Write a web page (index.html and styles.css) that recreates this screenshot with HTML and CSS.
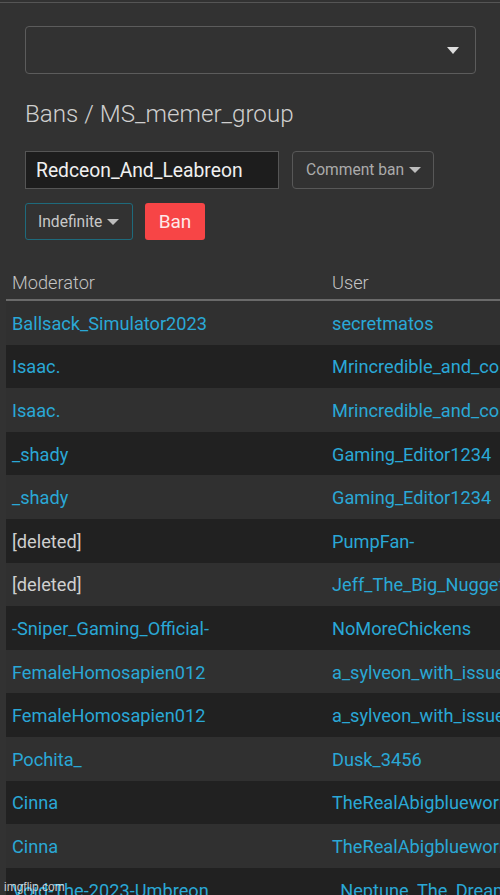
FILE: index.html
```html
<!DOCTYPE html>
<html>
<head>
<meta charset="utf-8">
<link rel="stylesheet" href="styles.css">
</head>
<body>
<div class="topline"></div>
<div class="form">
  <div class="select-big"><span class="caret"></span></div>
  <h1 class="title">Bans / MS_memer_group</h1>
  <div class="row">
    <div class="input">Redceon_And_Leabreon</div>
    <div class="dropdown comment">Comment ban <span class="caret small"></span></div>
  </div>
  <div class="row row2">
    <div class="dropdown indef">Indefinite <span class="caret small"></span></div>
    <div class="btn-ban">Ban</div>
  </div>
</div>
<table class="bans">
  <thead>
    <tr><th class="c1">Moderator</th><th>User</th></tr>
  </thead>
  <tbody>
    <tr><td class="c1"><a>Ballsack_Simulator2023</a></td><td><a>secretmatos</a></td></tr>
    <tr><td class="c1"><a>Isaac.</a></td><td><a>Mrincredible_and_co</a></td></tr>
    <tr><td class="c1"><a>Isaac.</a></td><td><a>Mrincredible_and_co</a></td></tr>
    <tr><td class="c1"><a>_shady</a></td><td><a>Gaming_Editor1234</a></td></tr>
    <tr><td class="c1"><a>_shady</a></td><td><a>Gaming_Editor1234</a></td></tr>
    <tr><td class="c1 del">[deleted]</td><td><a>PumpFan-</a></td></tr>
    <tr><td class="c1 del">[deleted]</td><td><a>Jeff_The_Big_Nugget</a></td></tr>
    <tr><td class="c1"><a>-Sniper_Gaming_Official-</a></td><td><a>NoMoreChickens</a></td></tr>
    <tr><td class="c1"><a>FemaleHomosapien012</a></td><td><a>a_sylveon_with_issues</a></td></tr>
    <tr><td class="c1"><a>FemaleHomosapien012</a></td><td><a>a_sylveon_with_issues</a></td></tr>
    <tr><td class="c1"><a>Pochita_</a></td><td><a>Dusk_3456</a></td></tr>
    <tr><td class="c1"><a>Cinna</a></td><td><a>TheRealAbigblueworm</a></td></tr>
    <tr><td class="c1"><a>Cinna</a></td><td><a>TheRealAbigblueworm</a></td></tr>
    <tr><td class="c1"><a>Void-The-2023-Umbreon</a></td><td><a>_Neptune_The_Dreamer</a></td></tr>
  </tbody>
</table>
<div class="watermark">imgflip.com</div>
</body>
</html>
```
FILE: styles.css
```css
html, body {
  margin: 0;
  padding: 0;
  background: #323232;
  overflow: hidden;
  width: 500px;
  height: 895px;
  font-family: Roboto, "Noto Sans", sans-serif;
  position: relative;
}
.topline {
  height: 1px;
  margin-top: 2px;
  background: #555;
}
.form {
  padding: 23px 24px 0 25px;
}
.select-big {
  height: 46px;
  border: 1px solid #5c5c5c;
  border-radius: 4px;
  display: flex;
  align-items: center;
  justify-content: flex-end;
  padding-right: 16px;
}
.caret {
  width: 0;
  height: 0;
  border-left: 6px solid transparent;
  border-right: 6px solid transparent;
  border-top: 7px solid #dedede;
}
.caret.small {
  border-left-width: 6px;
  border-right-width: 6px;
  border-top-width: 6px;
  border-top-color: #bdbdbd;
  margin-left: 5px;
}
.title {
  margin: 24px 0 0 0;
  font-size: 24.2px;
  font-weight: 300;
  color: #cfcfcf;
  line-height: 33px;
  height: 32px;
}
.row {
  display: flex;
  gap: 13px;
  margin-top: 21px;
}
.row2 {
  margin-top: 14px;
  gap: 12px;
}
.input {
  width: 242px;
  height: 36px;
  background: #1d1d1d;
  border: 1px solid #555;
  color: #f0f0f0;
  font-size: 19.3px;
  line-height: 38px;
  padding-left: 10px;
  white-space: nowrap;
}
.dropdown {
  display: flex;
  align-items: center;
  border: 1px solid #585858;
  border-radius: 4px;
  color: #ababab;
  font-size: 15.6px;
  box-sizing: border-box;
  white-space: nowrap;
}
.comment {
  width: 142px;
  height: 38px;
  padding-left: 13px;
}
.indef {
  width: 108px;
  height: 37px;
  padding-left: 12px;
  border-color: #1e6a7c;
  color: #c8c8c8;
  border-radius: 3px;
}
.btn-ban {
  width: 60px;
  height: 37px;
  background: #f74546;
  border-radius: 3px;
  color: #fde8e8;
  font-size: 19px;
  display: flex;
  align-items: center;
  justify-content: center;
}
.bans {
  margin-top: 21px;
  margin-left: 6px;
  border-collapse: collapse;
  width: 580px;
  table-layout: fixed;
}
.bans th {
  text-align: left;
  font-weight: 300;
  font-size: 18.2px;
  color: #c4c4c4;
  height: 33px;
  padding: 5px 0 0 6px;
  border-bottom: 2px solid #6a6a6a;
  vertical-align: middle;
}
.bans .c1 {
  width: 320px;
  box-sizing: border-box;
}
.bans td {
  height: 42.6px;
  padding: 1px 0 0 6px;
  font-size: 18.2px;
  white-space: nowrap;
  overflow: hidden;
  vertical-align: middle;
}
.bans tbody tr:nth-child(odd) {
  background: #303030;
}
.bans tbody tr:nth-child(even) {
  background: #212121;
}
.bans a {
  color: #2aa8d6;
}
.bans .del {
  color: #cfcfcf;
}
.watermark {
  position: absolute;
  left: 4px;
  bottom: 1px;
  font-family: "Liberation Sans", sans-serif;
  font-size: 12px;
  color: rgba(235,235,235,0.85);
}
```
